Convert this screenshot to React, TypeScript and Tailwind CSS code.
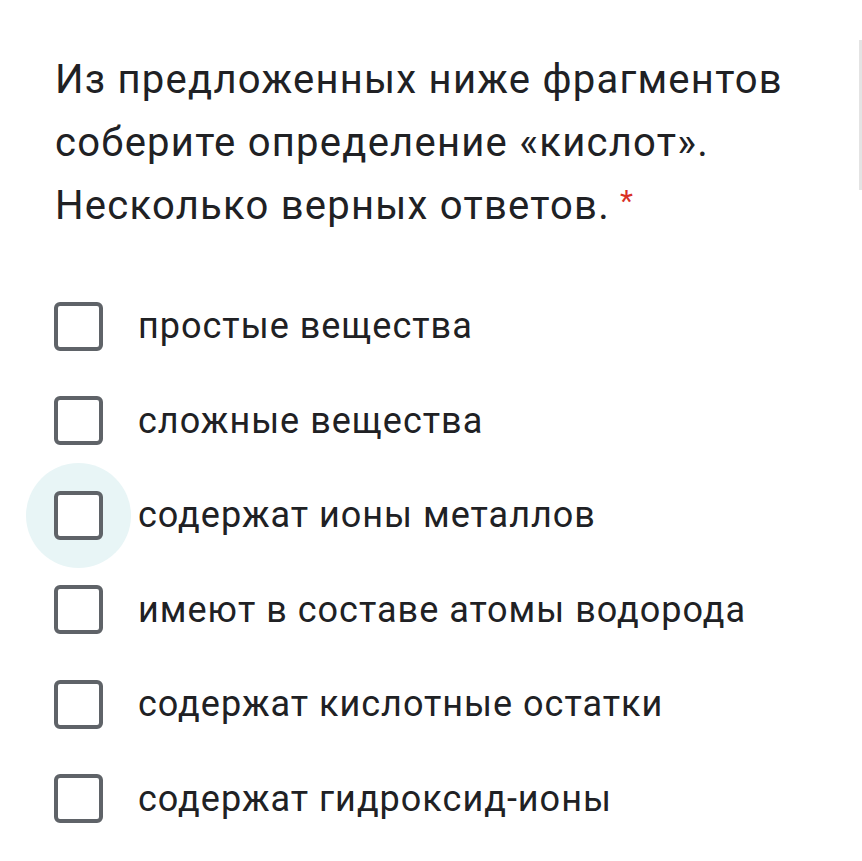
import React from "react";

const options = [
  "простые вещества",
  "сложные вещества",
  "содержат ионы металлов",
  "имеют в составе атомы водорода",
  "содержат кислотные остатки",
  "содержат гидроксид-ионы",
];

export default function App() {
  return (
    <div className="relative w-[862px] h-[861px] bg-white overflow-hidden" style={{ fontFamily: "Roboto, 'Noto Sans', sans-serif" }}>
      <div className="absolute right-0 top-[40px] w-[3px] h-[150px] bg-[#e4e4e4]" />
      <div className="pl-[54px] pt-[48px]">
        <div className="ml-[1px] text-[40px] leading-[63px] text-[#202124] tracking-[1.25px]">
          <div>Из предложенных ниже фрагментов</div>
          <div>соберите определение «кислот».</div>
          <div className="flex items-start">
            <span>Несколько верных ответов.</span>
            <span className="text-[#d93025] text-[30px] leading-[30px] mt-[12px] ml-[10px]">*</span>
          </div>
        </div>
        <div className="mt-[42px] flex flex-col">
          {options.map((o, i) => (
            <div key={i} className="flex items-center h-[94.5px]">
              <div className="relative w-[49px] h-[49px] shrink-0">
                {i === 2 && (
                  <div className="absolute left-[-28px] top-[-28px] w-[105px] h-[105px] rounded-full bg-[#e8f5f6]" />
                )}
                <div className="relative w-[49px] h-[49px] rounded-[6px] border-[4px] border-[#5f6368] bg-white" />
              </div>
              <div className="ml-[35px] text-[36px] text-[#202124] tracking-[1px]">{o}</div>
            </div>
          ))}
        </div>
      </div>
    </div>
  );
}
